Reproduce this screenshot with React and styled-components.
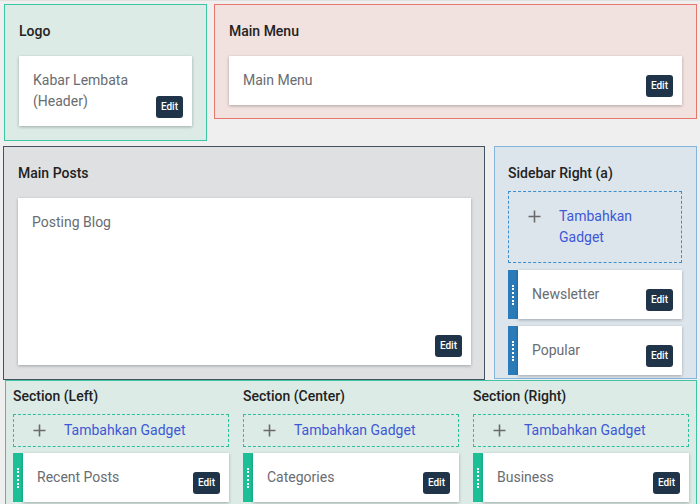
import React from "react";
import styled, { createGlobalStyle } from "styled-components";

const Global = createGlobalStyle`
  html, body { margin: 0; padding: 0; background: #efefef; }
  body { font-family: Roboto, "Liberation Sans", Arial, sans-serif; }
  * { box-sizing: border-box; }
`;

const Page = styled.div`
  width: 700px;
  height: 504px;
  overflow: hidden;
  padding-top: 3px;
  border-top: 1px solid #e2e2e2;
`;

const Row = styled.div`
  display: flex;
  align-items: ${(p) => p.$align || "flex-start"};
  gap: ${(p) => p.$gap}px;
  padding-left: ${(p) => p.$left}px;
  margin-top: ${(p) => p.$top || 0}px;
`;

const themes = {
  teal: { bg: "#dcebe6", border: "#3cc6a3" },
  red: { bg: "#f1e1df", border: "#e7776c" },
  gray: { bg: "#dfe0e2", border: "#45515e" },
  blue: { bg: "#dde5ec", border: "#86b5da" },
};

const Section = styled.div`
  width: ${(p) => p.$w}px;
  background: ${(p) => themes[p.$theme].bg};
  border: 1px solid ${(p) => themes[p.$theme].border};
  padding: ${(p) => p.$pad};
  display: flex;
  flex-direction: column;
`;

const Title = styled.div`
  font-size: 14px;
  line-height: 20px;
  font-weight: 500;
  color: #222;
  margin-bottom: ${(p) => p.$mb}px;
`;

const Card = styled.div`
  position: relative;
  background: #fff;
  box-shadow: 0 1px 3px rgba(0, 0, 0, 0.28);
  padding: 14px 14px;
  min-height: ${(p) => p.$minH || 0}px;
  flex: 1;
`;

const CardText = styled.div`
  font-size: 14px;
  line-height: 21px;
  color: #696c70;
  max-width: ${(p) => (p.$max ? p.$max + "px" : "none")};
`;

const EditBtn = styled.button`
  position: absolute;
  right: 9px;
  bottom: 8px;
  height: 22px;
  padding: 0 5px;
  border: none;
  border-radius: 3px;
  background: #1f3448;
  color: #fff;
  font-family: Roboto, "Liberation Sans", Arial, sans-serif;
  font-size: 10px;
  font-weight: 500;
  line-height: 22px;
  cursor: pointer;
`;

const AddBox = styled.div`
  display: flex;
  align-items: ${(p) => (p.$tall ? "flex-start" : "center")};
  border: 1px dashed ${(p) => p.$color};
  padding: ${(p) => (p.$tall ? "14px 0" : "5px 0")};
  margin-bottom: ${(p) => p.$mb}px;
`;

const PlusWrap = styled.span`
  width: 50px;
  height: 21px;
  display: flex;
  align-items: center;
  padding-left: 19px;
  flex: none;
`;

const AddLink = styled.span`
  font-size: 14px;
  line-height: 21px;
  color: #3d58d6;
  max-width: ${(p) => (p.$max ? p.$max + "px" : "none")};
`;

const Widget = styled.div`
  display: flex;
  margin-bottom: ${(p) => p.$mb || 0}px;
`;

const Handle = styled.div`
  width: 10px;
  flex: none;
  background: ${(p) => p.$color};
  display: flex;
  align-items: center;
  justify-content: center;
`;

const Dots = styled.span`
  width: 0;
  height: 20px;
  border-left: 2px dotted #fff;
`;

const Bottom = styled.div`
  margin-left: 5px;
  width: 692px;
  background: #dcebe6;
  border: 1px solid #3cc6a3;
  border-bottom: none;
  padding: 5px 7px 10px;
  display: grid;
  grid-template-columns: repeat(3, 1fr);
  column-gap: 14px;
`;

const Column = styled.div`
  display: flex;
  flex-direction: column;
`;

const Plus = () => (
  <svg width="13" height="13" viewBox="0 0 13 13">
    <path d="M6.5 0.5v12M0.5 6.5h12" stroke="#6a6a6a" strokeWidth="1.6" fill="none" />
  </svg>
);

const Gadget = ({ name, color, mb }) => (
  <Widget $mb={mb}>
    <Handle $color={color}>
      <Dots />
    </Handle>
    <Card>
      <CardText>{name}</CardText>
      <EditBtn>Edit</EditBtn>
    </Card>
  </Widget>
);

export default function App() {
  return (
    <Page>
      <Global />
      <Row $gap={7} $left={4}>
        <Section $w={203} $theme="teal" $pad="16px 14px 14px 14px">
          <Title $mb={15}>Logo</Title>
          <Card>
            <CardText $max={120}>Kabar Lembata (Header)</CardText>
            <EditBtn>Edit</EditBtn>
          </Card>
        </Section>
        <Section $w={483} $theme="red" $pad="16px 14px 13px 14px">
          <Title $mb={15}>Main Menu</Title>
          <Card>
            <CardText>Main Menu</CardText>
            <EditBtn>Edit</EditBtn>
          </Card>
        </Section>
      </Row>
      <Row $gap={9} $left={3} $top={5}>
        <Section $w={482} $theme="gray" $pad="16px 13px 14px 14px">
          <Title $mb={15}>Main Posts</Title>
          <Card $minH={167}>
            <CardText>Posting Blog</CardText>
            <EditBtn>Edit</EditBtn>
          </Card>
        </Section>
        <Section $w={203} $theme="blue" $pad="16px 14px 3px 13px">
          <Title $mb={8}>Sidebar Right (a)</Title>
          <AddBox $color="#3b8fd0" $tall $mb={7}>
            <PlusWrap>
              <Plus />
            </PlusWrap>
            <AddLink $max={90}>Tambahkan Gadget</AddLink>
          </AddBox>
          <Gadget name="Newsletter" color="#2a7bb8" mb={7} />
          <Gadget name="Popular" color="#2a7bb8" />
        </Section>
      </Row>
      <Bottom>
        {[
          ["Section (Left)", "Recent Posts"],
          ["Section (Center)", "Categories"],
          ["Section (Right)", "Business"],
        ].map(([title, gadget]) => (
          <Column key={title}>
            <Title $mb={8}>{title}</Title>
            <AddBox $color="#2dbf9a" $mb={6}>
              <PlusWrap>
                <Plus />
              </PlusWrap>
              <AddLink>Tambahkan Gadget</AddLink>
            </AddBox>
            <Gadget name={gadget} color="#1dbf96" />
          </Column>
        ))}
      </Bottom>
    </Page>
  );
}
